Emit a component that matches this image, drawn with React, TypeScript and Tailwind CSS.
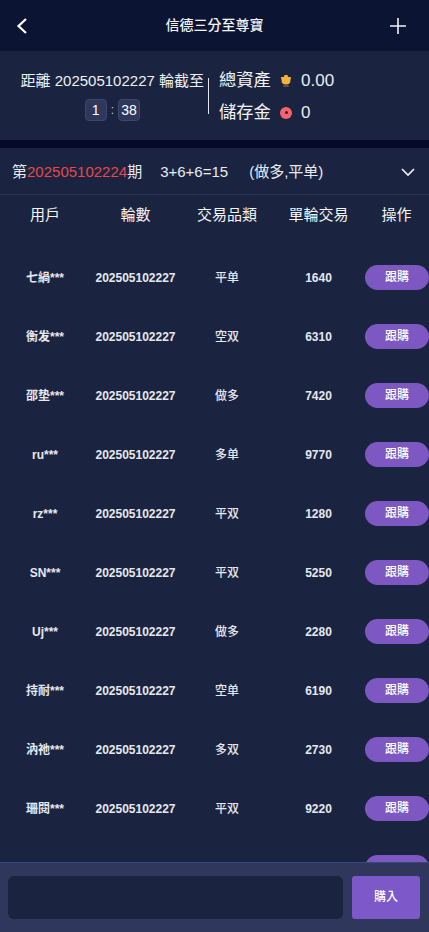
const rows = [
  { user: "七緺***", type: "平单", amount: 1640 },
  { user: "衡发***", type: "空双", amount: 6310 },
  { user: "邵垫***", type: "做多", amount: 7420 },
  { user: "ru***", type: "多单", amount: 9770 },
  { user: "rz***", type: "平双", amount: 1280 },
  { user: "SN***", type: "平双", amount: 5250 },
  { user: "Uj***", type: "做多", amount: 2280 },
  { user: "持耐***", type: "空单", amount: 6190 },
  { user: "汭祂***", type: "多双", amount: 2730 },
  { user: "珊閱***", type: "平双", amount: 9220 },
];

const columns = "grid grid-cols-[90px_91px_92px_91px_65px] items-center text-center";

function Countdown({ value }: { value: string }) {
  return (
    <span className="flex h-[22px] min-w-[22px] items-center justify-center rounded-[4px] border border-[#3d4670] bg-[#2f375c] text-[14px] leading-none text-white">
      {value}
    </span>
  );
}

export default function App() {
  return (
    <div className="flex h-[932px] w-[429px] flex-col overflow-hidden bg-[#1a2440] font-['Liberation_Sans','Noto_Sans_CJK_TC',sans-serif] text-white">
      {/* Header */}
      <header className="flex h-[51px] shrink-0 items-center justify-between bg-[#0c1433] pl-[14px] pr-[22px]">
        <svg width="16" height="18" viewBox="0 0 16 18" fill="none" stroke="white" strokeWidth="2.2">
          <path d="M12 2 L4.5 9 L12 16" />
        </svg>
        <h1 className="ml-[10px] text-[14px] font-medium text-[#f2f3f6]">信德三分至尊寶</h1>
        <svg width="18" height="18" viewBox="0 0 18 18" stroke="#f2f3f6" strokeWidth="1.6">
          <path d="M9 1 V17 M1 9 H17" />
        </svg>
      </header>

      {/* Countdown and balances */}
      <section className="flex h-[89px] shrink-0 items-center">
        <div className="flex w-[208px] flex-col items-end gap-[9px] pr-[4px] pt-[1px]">
          <p className="whitespace-nowrap text-[15px] leading-[18px] text-[#eef0f4]">距離 202505102227 輪截至</p>
          <div className="mr-[64px] flex items-center gap-[4px] text-[12px] text-[#ccd0da]">
            <Countdown value="1" />
            <span>:</span>
            <Countdown value="38" />
          </div>
        </div>
        <div className="h-[36px] w-px bg-[#e5e7ee]" />
        <div className="ml-[10px] flex flex-col gap-[6px] pt-[2px]">
          <div className="flex h-[26px] items-center">
            <span className="w-[52px] whitespace-nowrap text-[17.3px] text-[#f2f3f6]">總資產</span>
            <svg className="ml-[9px]" width="12" height="14" viewBox="0 0 12 14">
              <path d="M1 3 L4 3 L4.5 1 L7.5 1 L8 3 L11 3 L10 9 Q6 12 2 9 Z" fill="#f3b33d" />
              <rect x="3" y="11" width="6" height="2" rx="1" fill="#f3b33d" opacity="0.3" />
            </svg>
            <span className="ml-[9px] text-[17px] text-[#e9ebf0]">0.00</span>
          </div>
          <div className="flex h-[26px] items-center">
            <span className="w-[52px] whitespace-nowrap text-[17.3px] text-[#f2f3f6]">儲存金</span>
            <span className="ml-[9px] flex h-[12px] w-[12px] items-center justify-center rounded-full bg-[#f4646a]">
              <span className="h-[3px] w-[3px] rounded-full bg-[#3a1a28]" />
            </span>
            <span className="ml-[9px] text-[17px] text-[#e9ebf0]">0</span>
          </div>
        </div>
      </section>

      <div className="h-[8px] shrink-0 bg-[#050a2a]" />

      {/* Last result */}
      <div className="flex h-[47px] shrink-0 items-center border-b border-[#2a3556] pl-[12px] pr-[14px] pt-[2px] text-[15px] text-[#e9ebf0]">
        <span>
          第<span className="text-[#e5484d]">202505102224</span>期
        </span>
        <span className="ml-[18px]">3+6+6=15</span>
        <span className="ml-[21px]">(做多,平单)</span>
        <svg className="ml-auto" width="14" height="9" viewBox="0 0 14 9" fill="none" stroke="#f2f3f6" strokeWidth="1.6">
          <path d="M1 1 L7 7 L13 1" />
        </svg>
      </div>

      {/* Table */}
      <div className={`${columns} h-[41px] shrink-0 text-[15px] text-[#f5f6f8]`}>
        <span>用戶</span>
        <span>輪數</span>
        <span>交易品類</span>
        <span>單輪交易</span>
        <span>操作</span>
      </div>
      <div className="min-h-0 flex-1 overflow-hidden pt-[11px]">
        {rows.map((row) => (
          <div key={row.user} className={`${columns} h-[59px] text-[12px] font-bold text-[#e6e8ee] pt-[1px] [&>span]:pt-[2px]`}>
            <span>{row.user}</span>
            <span>202505102227</span>
            <span className="font-medium">{row.type}</span>
            <span>{row.amount}</span>
            <button className="h-[25px] w-[64px] justify-self-end rounded-full bg-[#7d58c2] text-[12px] font-medium text-white">
              跟購
            </button>
          </div>
        ))}
        <div className={`${columns} h-[59px] pt-[1px]`}>
          <span className="col-start-5 h-[25px] w-[64px] justify-self-end rounded-full bg-[#7d58c2]" />
        </div>
      </div>

      {/* Buy bar */}
      <footer className="flex h-[70px] shrink-0 items-center border-t border-[#3a4a78] bg-[#2f375c] pb-[1px] pl-[8px] pr-[9px]">
        <input className="h-[43px] w-[335px] rounded-[6px] bg-[#1a2440] outline-none" />
        <button className="ml-[9px] h-[43px] w-[68px] rounded-[3px] bg-[#7d58c8] text-[12px] font-medium text-white">購入</button>
      </footer>
    </div>
  );
}
